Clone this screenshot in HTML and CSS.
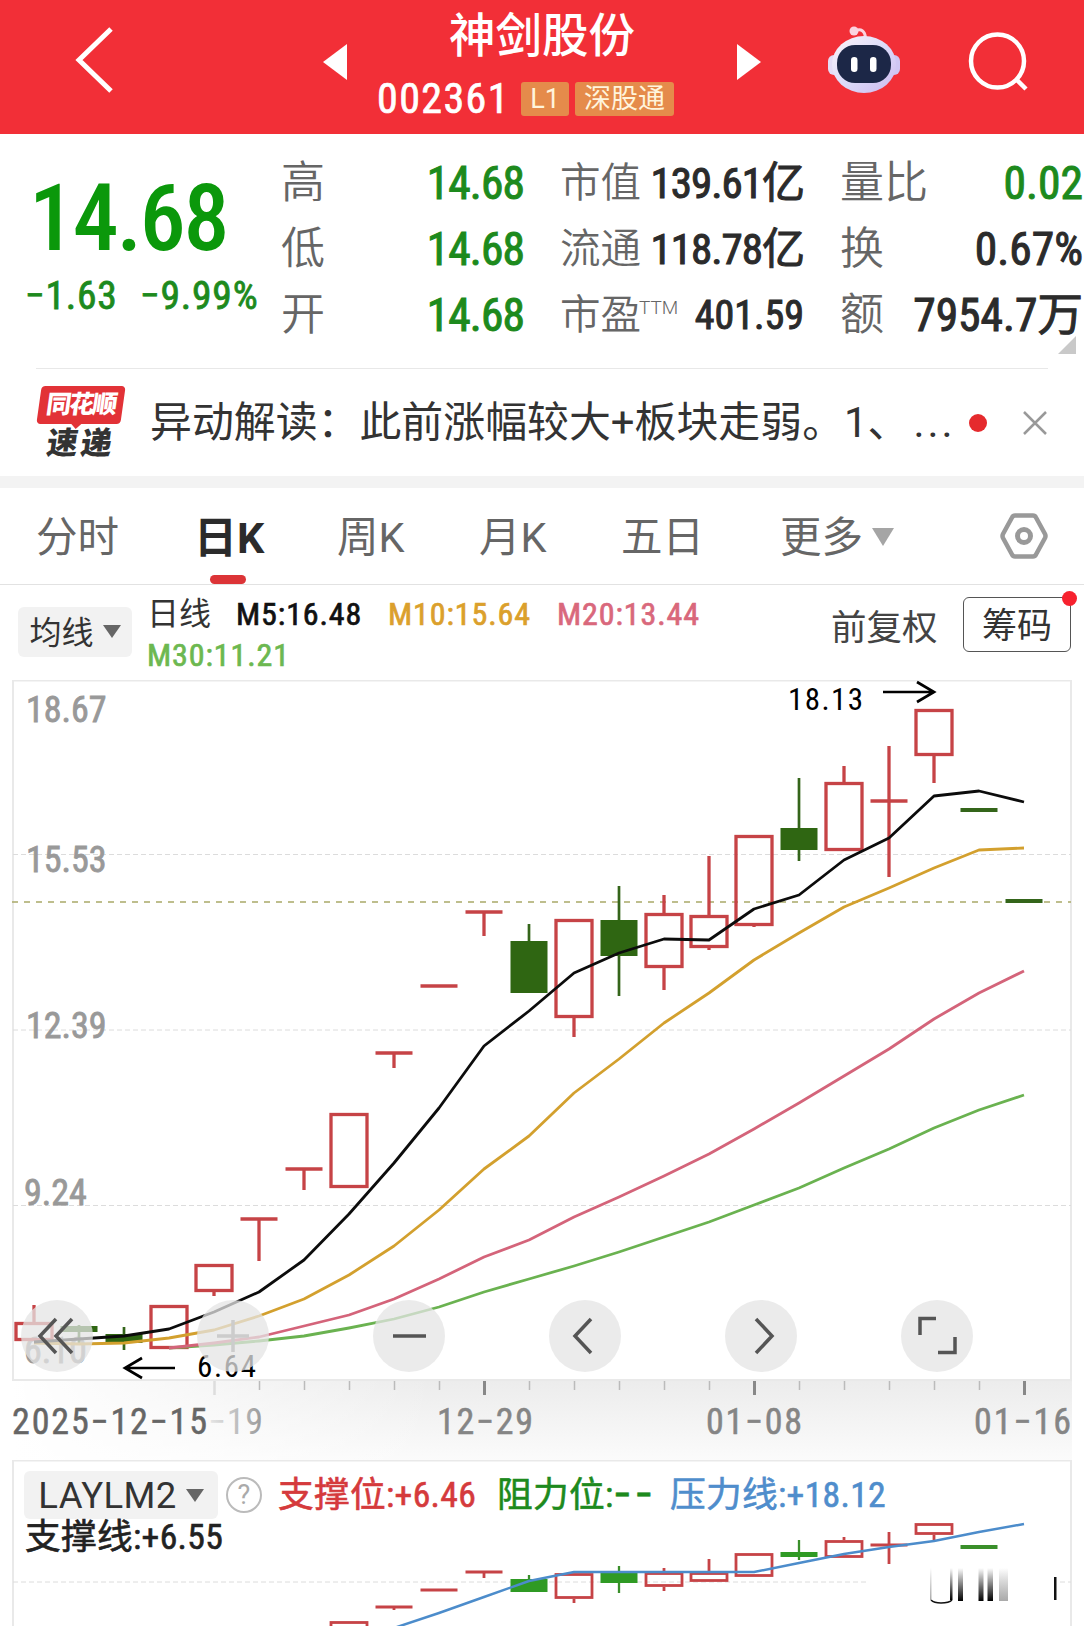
FILE: index.html
```html
<!DOCTYPE html>
<html lang="zh-CN">
<head>
  <meta charset="UTF-8">
  <meta name="viewport" content="width=device-width, initial-scale=1.0">
  <title>神剑股份 002361</title>
  <link rel="stylesheet" href="styles.css">
</head>
<body>

  <header class="header">
    <svg class="back" width="40" height="68" viewBox="0 0 40 68"><path d="M37 3 L5 34 L37 65" fill="none" stroke="#fff" stroke-width="5"/></svg>
    <svg class="prev" width="24" height="36" viewBox="0 0 24 36"><path d="M0 18 L24 0 V36 Z" fill="#fff"/></svg>
    <div class="stock">
      <h1>神剑股份</h1>
      <div class="code-row">
        <span class="code">002361</span>
        <span class="tag tag-l1">L1</span>
        <span class="tag">深股通</span>
      </div>
    </div>
    <svg class="next" width="24" height="36" viewBox="0 0 24 36"><path d="M24 18 L0 0 V36 Z" fill="#fff"/></svg>
    <svg class="robot" width="72" height="68" viewBox="0 0 72 68">
      <defs>
        <linearGradient id="shell" x1="0" y1="0" x2="1" y2="1">
          <stop offset="0" stop-color="#fdf3f8"/>
          <stop offset="0.5" stop-color="#dcdcfa"/>
          <stop offset="1" stop-color="#cdb8ee"/>
        </linearGradient>
      </defs>
      <path d="M27 5 C33 2 37 5 37.500 12" fill="none" stroke="#fbd3df" stroke-width="3"/>
      <circle cx="26" cy="5" r="4.500" fill="#fbd3df"/>
      <rect x="0" y="29" width="12" height="20" rx="6" fill="#e4dcf6"/>
      <rect x="60" y="29" width="12" height="20" rx="6" fill="#cfc6f3"/>
      <ellipse cx="36" cy="38.500" rx="32" ry="28.500" fill="url(#shell)"/>
      <rect x="9" y="19" width="54" height="38" rx="18" fill="#1c2747"/>
      <rect x="23" y="31" width="6.500" height="15" rx="3.200" fill="#fff"/>
      <rect x="42" y="31" width="6.500" height="15" rx="3.200" fill="#fff"/>
    </svg>
    <svg class="search" width="62" height="62" viewBox="0 0 62 62"><g fill="none" stroke="#fff" stroke-width="4.500"><circle cx="29.500" cy="30" r="26.500"/><path d="M48 48 L58 58"/></g></svg>
  </header>

  <section class="quote">
    <div class="price-box">
      <div class="price">14.68</div>
      <div class="change"><span>−1.63</span><span>−9.99%</span></div>
    </div>
    <div class="col">
      <div class="row"><span class="label">高</span><span class="val down">14.68</span></div>
      <div class="row"><span class="label">低</span><span class="val down">14.68</span></div>
      <div class="row"><span class="label">开</span><span class="val down">14.68</span></div>
    </div>
    <div class="col col-mid">
      <div class="row"><span class="label">市值</span><span class="val">139.61亿</span></div>
      <div class="row"><span class="label">流通</span><span class="val">118.78亿</span></div>
      <div class="row"><span class="label">市盈<sup>TTM</sup></span><span class="val pe">401.59</span></div>
    </div>
    <div class="col col-right">
      <div class="row"><span class="label">量比</span><span class="val down">0.02</span></div>
      <div class="row"><span class="label">换</span><span class="val">0.67%</span></div>
      <div class="row"><span class="label">额</span><span class="val">7954.7万</span></div>
    </div>
    <i class="corner"></i>
  </section>

  <section class="news">
    <div class="news-logo">
      <span class="logo-top"><b>同花顺</b></span>
      <span class="logo-bottom">速递</span>
    </div>
    <p class="news-text">异动解读：此前涨幅较大+板块走弱。1、<span class="dots">...</span></p>
    <i class="news-dot"></i>
    <svg width="24" height="24" viewBox="0 0 24 24"><path d="M1 1 L23 23 M23 1 L1 23" stroke="#999" stroke-width="2.500"/></svg>
  </section>

  <nav class="tabs">
    <a>分时</a>
    <a class="active">日K</a>
    <a>周K</a>
    <a>月K</a>
    <a>五日</a>
    <a class="more">更多<i class="caret"></i></a>
    <svg class="setting" width="48" height="46" viewBox="0 0 48 46"><g fill="none" stroke="#999"><path d="M15 2.500 H33 Q35 2.500 36 4.500 L45 21 Q46 23 45 25 L36 41.500 Q35 43.500 33 43.500 H15 Q13 43.500 12 41.500 L3 25 Q2 23 3 21 L12 4.500 Q13 2.500 15 2.500 Z" stroke-width="4.500"/><circle cx="24" cy="23" r="6.500" stroke-width="5"/></g></svg>
  </nav>

  <section class="legend">
    <button class="ma-btn" type="button">均线<i class="caret"></i></button>
    <div class="ma-list">
      <div class="ma-row">
        <span class="m-day">日线</span>
        <span class="m5">M5:16.48</span>
        <span class="m10">M10:15.64</span>
        <span class="m20">M20:13.44</span>
      </div>
      <div class="ma-row"><span class="m30">M30:11.21</span></div>
    </div>
    <span class="fq">前复权</span>
    <button class="chip-btn" type="button">筹码<i></i></button>
  </section>

  <section class="kline">
    <svg id="kline" width="1084" height="780" viewBox="0 680 1084 780"></svg>
    <div class="tools">
      <button type="button"><svg viewBox="0 0 72 72"><path d="M35 19 L19 36 L35 53 M51 19 L35 36 L51 53"/></svg></button>
      <button type="button" class="disabled"><svg viewBox="0 0 72 72"><path d="M20 36 H52 M36 20 V52"/></svg></button>
      <button type="button"><svg viewBox="0 0 72 72"><path d="M20 36 H53"/></svg></button>
      <button type="button"><svg viewBox="0 0 72 72"><path d="M42 19 L26 36 L42 53"/></svg></button>
      <button type="button"><svg viewBox="0 0 72 72"><path d="M31 19 L47 36 L31 53"/></svg></button>
      <button type="button"><svg viewBox="0 0 72 72"><path d="M19 35 V18.500 H35 M37 52.500 H54 V37"/></svg></button>
    </div>
  </section>

  <section class="indicator">
    <svg id="indicator" width="1084" height="166" viewBox="0 1460 1084 166"></svg>
    <div class="ind-head">
      <button class="ind-btn" type="button">LAYLM2<i class="caret"></i></button>
      <span class="help">?</span>
      <span class="ind-red">支撑位:+6.46</span>
      <span class="ind-green">阻力位:<b>−−</b></span>
      <span class="ind-blue">压力线:+18.12</span>
    </div>
    <div class="ind-line">支撑线:+6.55</div>
  </section>

  <script>
    const X0 = 34, STEP = 45;
    const x = i => X0 + STEP * i;

    // [index, type, high, bodyTop, bodyBottom, low]
    const main = [
      [0, 'up', 1305, 1322, 1341, 1341], [1, 'down', 1325, 1326, 1332, 1343],
      [2, 'down', 1327, 1334, 1343, 1350], [3, 'up', 1305, 1305, 1349, 1349],
      [4, 'up', 1264, 1264, 1292, 1296], [5, 'up', 1219, 1219, 1219, 1261],
      [6, 'up', 1169, 1169, 1169, 1190], [7, 'up', 1113, 1113, 1188, 1188],
      [8, 'up', 1053, 1053, 1053, 1068], [9, 'up', 986, 986, 986, 986],
      [10, 'up', 912, 912, 912, 936], [11, 'down', 924, 941, 993, 993],
      [12, 'up', 919, 919, 1018, 1037], [13, 'down', 886, 920, 956, 996],
      [14, 'up', 895, 913, 968, 990], [15, 'up', 856, 915, 948, 950],
      [16, 'up', 835, 835, 926, 927], [17, 'down', 778, 828, 850, 861],
      [18, 'up', 766, 782, 851, 851], [19, 'up', 746, 801, 801, 877],
      [20, 'up', 709, 709, 756, 783], [21, 'down', 810, 810, 810, 810],
      [22, 'down', 901, 901, 901, 901]
    ];
    const sub = [
      [7, 'up', 1621, 1621, 1640, 1640], [8, 'up', 1607, 1607, 1607, 1610],
      [9, 'up', 1590, 1590, 1590, 1590], [10, 'up', 1572, 1572, 1572, 1578],
      [11, 'down', 1575, 1579, 1592, 1592], [12, 'up', 1573, 1573, 1599, 1603],
      [13, 'down', 1566, 1573, 1583, 1593], [14, 'up', 1568, 1572, 1587, 1591],
      [15, 'up', 1559, 1572, 1582, 1582], [16, 'up', 1553, 1553, 1577, 1577],
      [17, 'down', 1540, 1552, 1557, 1560], [18, 'up', 1537, 1540, 1558, 1558],
      [19, 'up', 1532, 1545, 1545, 1564], [20, 'up', 1523, 1523, 1535, 1541],
      [21, 'down', 1547, 1547, 1547, 1547]
    ];
    const lines = {
      ma30: [3, 1348, 1345, 1341, 1336, 1328, 1319, 1307, 1292, 1279, 1266, 1252, 1237, 1222, 1205, 1188, 1168, 1149, 1128, 1110, 1095],
      ma20: [3, 1348, 1343, 1337, 1326, 1315, 1299, 1279, 1257, 1240, 1217, 1197, 1176, 1154, 1129, 1103, 1076, 1049, 1019, 993, 971],
      ma10: [0, 1343, 1344, 1343, 1338, 1330, 1316, 1299, 1275, 1246, 1210, 1169, 1136, 1093, 1059, 1023, 993, 960, 933, 907, 888, 868, 850, 848],
      ma5: [0, 1342, 1339, 1336, 1329, 1312, 1292, 1260, 1214, 1163, 1108, 1046, 1011, 973, 953, 939, 940, 909, 895, 860, 838, 796, 791, 802]
    };
    const press = [8, 1628, 1613, 1597, 1581, 1572, 1572, 1572, 1572, 1572, 1563, 1554, 1547, 1541, 1532, 1524];

    function candle([i, type, hi, top, bot, lo]) {
      const cx = x(i);
      let s = '';
      if (top === bot) {
        s += `<path class="${type}" d="M${cx - 18.5} ${top}h37"/>`;
        if (lo > hi) s += `<path class="${type}" d="M${cx} ${hi}V${lo}"/>`;
      } else if (type === 'up') {
        s += `<rect class="up" x="${cx - 18}" y="${top + 1.5}" width="36" height="${bot - top - 3}"/>`;
        if (hi < top) s += `<path class="up" d="M${cx} ${hi}V${top}"/>`;
        if (lo > bot) s += `<path class="up" d="M${cx} ${bot}V${lo}"/>`;
      } else {
        s += `<path class="down wick" d="M${cx} ${hi}V${lo}"/>`;
        s += `<rect class="fill" x="${cx - 18.5}" y="${top}" width="37" height="${bot - top}"/>`;
      }
      return s;
    }

    function line(cls, [start, ...ys]) {
      return `<polyline class="${cls}" points="${ys.map((y, k) => x(start + k) + ',' + y).join(' ')}"/>`;
    }

    function drawKline() {
      let s = `<defs>
        <linearGradient id="axis" x1="0" y1="0" x2="0" y2="1"><stop offset="0" stop-color="#ececec"/><stop offset="1" stop-color="#fbfbfb"/></linearGradient>
        <linearGradient id="fade"><stop offset="0" stop-color="#fff"/><stop offset="0.400" stop-color="#fff" stop-opacity="0"/></linearGradient>
        <linearGradient id="text19"><stop offset="0" stop-color="#e8e8e8"/><stop offset="1" stop-color="#999"/></linearGradient>
      </defs>`;
      s += '<rect x="12" y="1380" width="1060" height="80" fill="url(#axis)"/>';
      s += '<rect x="12" y="1380" width="1060" height="80" fill="url(#fade)"/>';
      s += '<rect class="frame" x="13" y="680.500" width="1058" height="699.500"/>';
      [854.5, 1030, 1205.500].forEach(y => s += `<path class="grid" d="M13 ${y}H1071"/>`);
      s += '<path class="now" d="M12 902H1071"/>';
      [['18.67', 722], ['15.53', 872], ['12.39', 1038], ['9.24', 1205], ['6.10', 1363]].forEach(([t, y]) =>
        s += `<text class="scale" x="${t.length > 4 ? 26 : 24}" y="${y}">${t}</text>`);
      s += main.map(candle).join('');
      for (const k in lines) s += line(k, lines[k]);
      s += '<text class="note" x="788" y="710" textLength="75">18.13</text><path class="arrow" d="M883 692H933M917 682L934 692L917 702"/>';
      s += '<text class="note" x="197" y="1377" textLength="59">6.64</text><path class="arrow" d="M175 1368H125M142 1358L125 1368L142 1378"/>';
      for (let i = 4; i <= 22; i++) {
        const major = (i - 4) % 6 === 0;
        s += `<path class="${i === 4 ? 'tick pale' : major ? 'tick major' : 'tick'}" d="M${x(i) + 0.5} 1381V${major ? 1395 : 1390}"/>`;
      }
      s += '<text class="date" x="208" y="1434" style="fill:url(#text19);stroke:none" textLength="55">−19</text>';
      s += '<text class="date first" x="12" y="1434" textLength="195">2025−12−15</text>';
      s += '<text class="date" x="437" y="1434" textLength="96">12−29</text>';
      s += '<text class="date" x="706" y="1434" textLength="96">01−08</text>';
      s += '<text class="date" x="974" y="1434" textLength="97">01−16</text>';
      document.getElementById('kline').innerHTML = s;
    }

    function drawIndicator() {
      let s = `<defs>
        <linearGradient id="bar" x1="0" y1="0" x2="0" y2="1"><stop offset="0" stop-color="#000" stop-opacity="0"/><stop offset="1" stop-color="#000"/></linearGradient>
        <linearGradient id="barSoft" x1="0" y1="0" x2="0" y2="1"><stop offset="0" stop-color="#999" stop-opacity="0"/><stop offset="1" stop-color="#aaa"/></linearGradient>
      </defs>`;
      s += '<path class="frame" d="M13 1626V1460.500H1071V1626"/>';
      s += '<path class="grid" d="M13 1582H866M1060 1582H1071"/>';
      s += sub.map(candle).join('') + line('press', press);
      s += '<path d="M931 1600Q934 1603 941 1603Q949 1603 952 1600" fill="none" stroke="#111" stroke-width="1.500"/>';
      s += '<rect x="930" y="1568" width="1.500" height="32" fill="url(#barSoft)"/><rect x="950" y="1568" width="2.500" height="32" fill="url(#bar)"/>';
      s += '<rect x="958" y="1568" width="5" height="33" fill="url(#bar)"/><rect x="978.500" y="1568" width="5" height="33" fill="url(#bar)"/>';
      s += '<rect x="987.500" y="1568" width="5.500" height="33" fill="url(#bar)"/><rect x="999" y="1568" width="9" height="33" fill="url(#barSoft)"/>';
      s += '<rect x="1054" y="1577" width="2.500" height="23" fill="#111"/>';
      document.getElementById('indicator').innerHTML = s;
    }

    drawKline();
    drawIndicator();
  </script>
</body>
</html>
```
FILE: styles.css
```css
* { box-sizing: border-box; }
body {
  margin: 0;
  width: 1084px;
  height: 1626px;
  overflow: hidden;
  background: #fff;
  color: #333;
  font-family: Roboto, "Noto Sans CJK SC", sans-serif;
  font-stretch: 75%;
}
button {
  border: none;
  padding: 0;
  font: inherit;
  color: inherit;
}
svg { display: block; }

/* header */
.header {
  display: flex;
  height: 134px;
  background: #f22f37;
  color: #fff;
}
.back { margin: 26px 0 0 74px; }
.prev { margin: 44px 0 0 209px; }
.stock { width: 390px; padding-top: 6px; text-align: center; }
.stock h1 {
  margin: 0;
  font-size: 46.5px;
  line-height: 60px;
  font-weight: 500;
}
.code-row {
  display: flex;
  margin-left: 30px;
  align-items: center;
  height: 66px;
}
.code {
  font-size: 42px;
  font-weight: 400;
  -webkit-text-stroke: 0.7px;
  letter-spacing: 1.4px;
  width: 144px;
  text-align: left;
  line-height: 66px;
}
.tag {
  height: 34px;
  line-height: 34px;
  width: 99px;
  border-radius: 3px;
  background: #e58b4b;
  color: #fff4dc;
  font-size: 27px;
}
.tag-l1 { width: 48px; margin-right: 6px; font-stretch: 100%; }
.next { margin: 44px 0 0; }
.robot { margin: 26px 0 0 67px; }
.search { margin: 31px 0 0 68px; }

/* quote */
.quote {
  position: relative;
  display: flex;
  height: 234px;
  padding-top: 16px;
}
.price-box { width: 281px; color: #0b980b; padding-left: 25px; }
.price {
  margin: 18px 0 0 4px;
  font-size: 92px;
  line-height: 102px;
  font-weight: 500;
  letter-spacing: -2.3px;
}
.change {
  display: flex;
  font-size: 39.5px;
  line-height: 52px;
  font-weight: 400;
  -webkit-text-stroke: 0.8px;
  letter-spacing: 0.8px;
  color: #1d8a1d;
}
.change span { width: 115px; white-space: nowrap; }
.col { width: 243px; }
.col-mid { margin-left: 36px; width: 244px; }
.col-right { margin-left: 36px; width: 243px; }
.row {
  display: flex;
  justify-content: space-between;
  height: 66px;
  line-height: 67px;
  white-space: nowrap;
}
.label { font-size: 44px; color: #666; font-weight: 350; }
.col-mid .label { font-size: 40.5px; }
.label sup { font-size: 19px; line-height: 0; vertical-align: 15px; font-stretch: 100%; margin-left: -2px; }
.val { font-size: 45.5px; font-weight: 400; -webkit-text-stroke: 1px; color: #2b2b2b; letter-spacing: -0.9px; }
.col-mid .val { font-size: 43px; letter-spacing: -1px; }
.col-mid .pe { font-size: 40px; letter-spacing: 0; }
.col-right .val { letter-spacing: 0; }
.val.down { color: #1d8a1d; }
.corner {
  position: absolute;
  right: 8px;
  bottom: 14px;
  border-left: 18px solid transparent;
  border-bottom: 18px solid #c9c9c9;
}

/* news */
.news {
  display: flex;
  align-items: center;
  height: 108px;
  margin: 0 36px;
  border-top: 1px solid #e8e8e8;
}
.news-logo { width: 89px; height: 76px; margin-right: 25px; }
.logo-top {
  position: relative;
  display: block;
  width: 84px;
  height: 38px;
  margin: 1px 0 0 3px;
  border-radius: 4px;
  background: #e23237;
  transform: skewX(-8deg);
  color: #fff;
  font-size: 25px;
  line-height: 38px;
  text-align: center;
}
.logo-top b { font-weight: 900; letter-spacing: -2px; }
.logo-top::after {
  content: "";
  position: absolute;
  left: 34px;
  top: 37px;
  border: 6px solid transparent;
  border-top-color: #e23237;
}
.logo-bottom {
  display: block;
  margin: 2px 0 0 11px;
  font-size: 31px;
  line-height: 36px;
  font-weight: 900;
  letter-spacing: 3px;
  transform: skewX(-8deg);
}
.news-text {
  width: 813px;
  margin: 0;
  font-size: 41.9px;
  line-height: 60px;
  white-space: nowrap;
  font-stretch: 100%;
}
.dots { margin-left: 4px; letter-spacing: 3px; }
.news-dot {
  width: 18px;
  height: 18px;
  margin: 0 36px 0 6px;
  border-radius: 50%;
  background: #e52a2d;
  flex: none;
}

/* tabs */
.tabs {
  display: flex;
  align-items: center;
  height: 109px;
  padding: 0 36px;
  border-top: 12px solid #f3f3f3;
  border-bottom: 1px solid #e2e2e2;
  font-size: 41.5px;
  color: #666;
  font-stretch: 100%;
}
.tabs a { position: relative; line-height: 100px; height: 96px; width: 142px; flex: none; white-space: nowrap; }
.tabs a:first-child { width: 158px; }
.tabs .active { color: #2b2b2b; font-weight: 700; font-size: 43px; width: 143px; }
.tabs a:nth-child(5) { width: 159px; }
.tabs .active::after {
  content: "";
  position: absolute;
  left: 16px;
  bottom: 0;
  width: 36px;
  height: 9px;
  border-radius: 5px;
  background: #dc3437;
}
.caret {
  display: inline-block;
  border: 9px solid transparent;
  border-top: 13px solid #666;
  border-bottom: 0;
}
.tabs .more { width: 220px; }
.more .caret { border-width: 18px 11px 0; border-top-color: #a5a5a5; margin-left: 9px; vertical-align: 6px; }
.setting { flex: none; }

/* legend */
.legend { display: flex; height: 95px; padding-left: 18px; }
.ma-btn {
  width: 114px;
  height: 50px;
  margin-top: 22px;
  border-radius: 6px;
  background: #f2f2f2;
  font-size: 32px;
  line-height: 53px;
}
.ma-btn .caret { margin-left: 9px; vertical-align: 6px; }
.ma-list {
  width: 580px;
  padding: 9px 0 0 15px;
  font-size: 32px;
  line-height: 41px;
  letter-spacing: 0.9px;
  -webkit-text-stroke: 0.7px;
}
.ma-row { display: flex; height: 41px; }
.ma-row .m-day { font-size: 32px; width: 89px; letter-spacing: 0; -webkit-text-stroke: 0; }
.m5 { color: #111; width: 152px; }
.m10 { color: #dba02c; width: 169px; }
.m20 { color: #d9687c; }
.m30 { color: #6cb850; }
.fq { margin: 22px 0 0 119px; width: 132px; font-size: 35.5px; line-height: 42px; color: #444; }
.chip-btn {
  position: relative;
  width: 108px;
  height: 55px;
  margin-top: 12px;
  border: 1.5px solid #555;
  border-radius: 6px;
  background: #fff;
  font-size: 35px;
  line-height: 57px;
}
.chip-btn i {
  position: absolute;
  right: -7px;
  top: -7px;
  width: 15px;
  height: 15px;
  border-radius: 50%;
  background: #f7222f;
}

/* charts */
.kline { position: relative; height: 780px; }
.frame { fill: none; stroke: #e9e9e9; stroke-width: 2; }
.grid { stroke: #dcdcdc; stroke-width: 1; stroke-dasharray: 5 3; }
.now { stroke: #a9a968; stroke-width: 1.5; stroke-dasharray: 6 6; }
.scale { font-size: 36px; fill: #999; stroke: #999; stroke-width: 0.8; }
.note { font-size: 31px; fill: #000; }
.arrow { fill: none; stroke: #000; stroke-width: 2.7; }
.date { font-size: 36px; fill: #858585; stroke: #858585; stroke-width: 0.5; }
.first { fill: #666; stroke: #666; }
.tick { stroke: #bbb; stroke-width: 1.5; }
.major { stroke: #888; stroke-width: 3; }
.pale { stroke: #ddd; stroke-width: 2.5; }
.up { fill: none; stroke: #c64346; stroke-width: 3.3; }
.down { stroke: #34651a; stroke-width: 4; }
.down.wick { stroke-width: 2.7; }
.fill { fill: #2f6612; }
#indicator .down { stroke: #3a8f2a; }
#indicator .down.wick { stroke-width: 2.3; }
#indicator .up { stroke-width: 2.8; }
#indicator .fill { fill: #2f9a24; }
polyline { fill: none; stroke-width: 2.8; stroke-linejoin: round; }
.ma5 { stroke: #0c0c0c; }
.ma10 { stroke: #d3a02e; }
.ma20 { stroke: #d4647a; }
.ma30 { stroke: #6ab250; }
.press { stroke: #4c8ccb; stroke-width: 2.5; }

.tools {
  position: absolute;
  left: 21px;
  top: 620px;
  display: flex;
  gap: 104px;
}
.tools button {
  width: 72px;
  height: 72px;
  border-radius: 50%;
  background: rgba(228, 228, 228, 0.75);
}
.tools path { fill: none; stroke: #555; stroke-width: 3.5; }
.tools .disabled path { stroke: #ccc; }

/* indicator */
.indicator { position: relative; height: 166px; padding: 11px 0 0 24px; }
.indicator > svg { position: absolute; left: 0; top: 0; }
.ind-head, .ind-line {
  position: relative;
  display: flex;
  align-items: center;
  height: 48px;
  font-size: 35.7px;
  line-height: 50px;
  white-space: nowrap;
  letter-spacing: 0.3px;
  -webkit-text-stroke: 0.6px;
}
.ind-btn {
  width: 194px;
  height: 48px;
  border-radius: 6px;
  background: #f2f2f2;
  font-size: 36.5px;
  font-stretch: 100%;
  letter-spacing: 0.4px;
  -webkit-text-stroke: 0;
}
.ind-btn .caret { margin-left: 9px; vertical-align: 6px; }
.help {
  width: 36px;
  height: 36px;
  margin: 0 16px 0 8px;
  border: 2.5px solid #bbb;
  border-radius: 50%;
  color: #aaa;
  font-size: 27px;
  line-height: 32px;
  text-align: center;
  font-stretch: 100%;
  -webkit-text-stroke: 0;
}
.ind-red { width: 219px; color: #d53a3c; }
.ind-green { width: 173px; color: #1d8a1d; }
.ind-green b { font-weight: 500; letter-spacing: 4px; }
.ind-blue { color: #4f8dcc; }
.ind-line { height: 36px; line-height: 32px; margin-left: 1px; color: #222; }
```
